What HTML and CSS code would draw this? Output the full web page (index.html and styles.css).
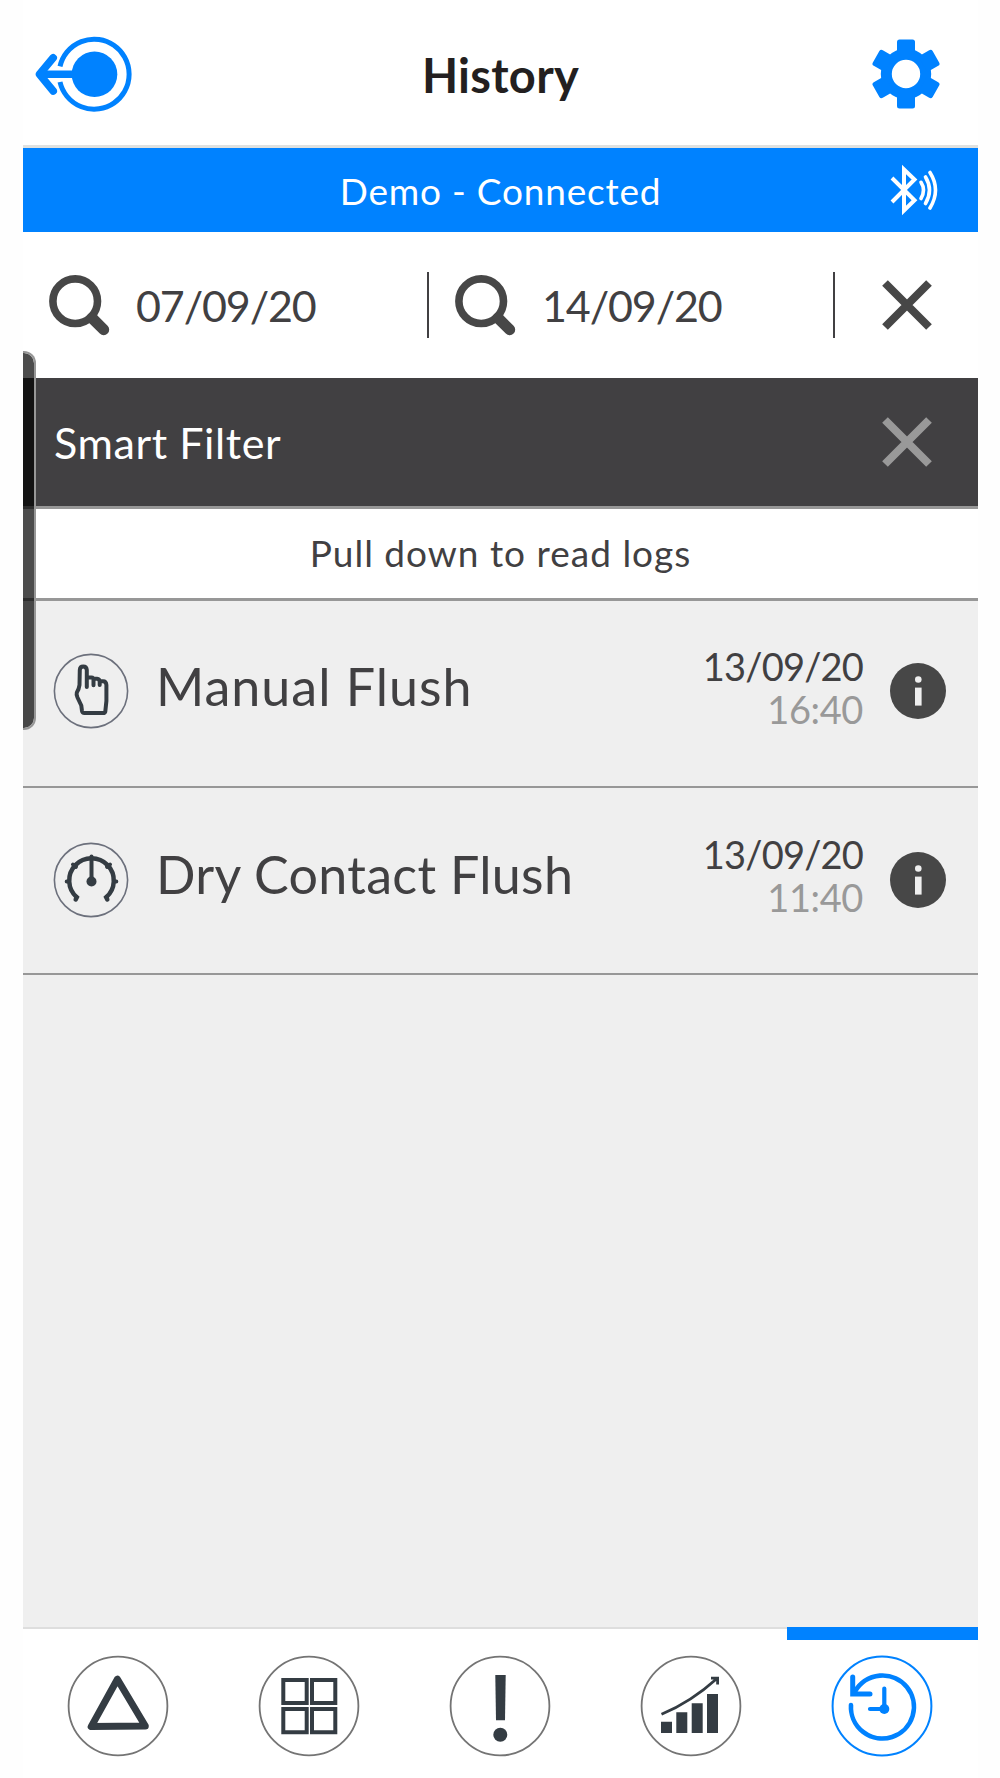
FILE: index.html
```html
<!DOCTYPE html>
<html lang="en">
<head>
    <meta charset="UTF-8">
    <meta name="viewport" content="width=device-width, initial-scale=1.0">
    <title>History</title>
    <link rel="stylesheet" href="styles.css">
</head>
<body>
    <div class="app">
        <header class="header">
            <svg class="icon-back" width="98" height="76" viewBox="0 0 98 76" fill="none" stroke="#0082ff">
                <path d="M25 30.4A35 35 0 1 1 25 46" stroke-width="5"/>
                <circle cx="59.5" cy="38.3" r="22.8" fill="#0082ff" stroke="none"/>
                <path d="M5 38.3H40" stroke-width="7.4"/>
                <path d="M18.2 21.8L4.5 38.3L18.2 55" stroke-width="7.6" stroke-linecap="round" stroke-linejoin="round"/>
            </svg>
            <h1>History</h1>
            <svg class="icon-gear" width="70" height="70" viewBox="-35 -35 70 70" fill="#0082ff">
                <circle r="19.7" fill="none" stroke="#0082ff" stroke-width="11"/>
                <rect x="-9" y="-34.5" width="18" height="15" rx="2.5"/>
                <rect x="-9" y="-34.5" width="18" height="15" rx="2.5" transform="rotate(60)"/>
                <rect x="-9" y="-34.5" width="18" height="15" rx="2.5" transform="rotate(120)"/>
                <rect x="-9" y="-34.5" width="18" height="15" rx="2.5" transform="rotate(180)"/>
                <rect x="-9" y="-34.5" width="18" height="15" rx="2.5" transform="rotate(240)"/>
                <rect x="-9" y="-34.5" width="18" height="15" rx="2.5" transform="rotate(300)"/>
            </svg>
        </header>

        <div class="status">
            <span>Demo - Connected</span>
            <svg class="icon-bt" width="50" height="52" viewBox="0 0 50 52" fill="none" stroke="#fff" stroke-width="4">
                <path d="M2 14L24.5 36.3L14 46.5V5.5L24.5 15.5L2 38"/>
                <g stroke-width="3.6" stroke-linecap="round">
                    <path d="M31 18.3Q36 26 31 34.5"/>
                    <path d="M35.5 13Q43.5 26 35.5 39.5"/>
                    <path d="M40 8.5Q51 26 40 44"/>
                </g>
            </svg>
        </div>

        <div class="dates">
            <div class="date-box">
                <svg width="61" height="61" viewBox="0 0 61 61" fill="none" stroke="#474747">
                    <circle cx="26.2" cy="26.2" r="22.3" stroke-width="7.6"/>
                    <path d="M43 43L54.7 54.7" stroke-width="11" stroke-linecap="round"/>
                </svg>
                <span>07/09/20</span>
            </div>
            <div class="date-box">
                <svg width="61" height="61" viewBox="0 0 61 61" fill="none" stroke="#474747">
                    <circle cx="26.2" cy="26.2" r="22.3" stroke-width="7.6"/>
                    <path d="M43 43L54.7 54.7" stroke-width="11" stroke-linecap="round"/>
                </svg>
                <span>14/09/20</span>
            </div>
            <div class="clear">
                <svg width="50" height="50" viewBox="0 0 50 50" stroke="#474747" stroke-width="8">
                    <path d="M3 3L47 47M47 3L3 47"/>
                </svg>
            </div>
        </div>

        <div class="smart">
            <span>Smart Filter</span>
            <svg width="50" height="50" viewBox="0 0 50 50" stroke="#999" stroke-width="8">
                <path d="M3 3L47 47M47 3L3 47"/>
            </svg>
        </div>

        <div class="pull">Pull down to read logs</div>

        <main class="logs">
            <div class="log">
                <svg class="log-icon" width="76" height="76" viewBox="0 0 76 76" fill="none" stroke="#343c43" stroke-width="4" stroke-linecap="round" stroke-linejoin="round">
                    <circle cx="38" cy="38" r="36.6" stroke="#6c707c" stroke-width="1.6"/>
                    <path d="M33.8 34V17Q33.5 13.5 30.2 13.5Q27 13.5 26.8 17L26.5 32Q26 36 23.8 39.5Q23.2 41.5 24.5 44.5L28.3 52.5L29 58Q29.3 60 31.5 60H50Q52 60 52.3 58.5L53.4 48V32Q53.2 28.2 50 28.2H46.7V32M34.5 24.5H38.5Q40.5 24.5 40.5 27V32.3M41 25.8H44Q46.7 26 46.7 29"/>
                </svg>
                <div class="log-name">Manual Flush</div>
                <div class="log-time">
                    <div class="day">13/09/20</div>
                    <div class="hour">16:40</div>
                </div>
                <svg class="info" width="56" height="56" viewBox="0 0 56 56">
                    <circle cx="28" cy="28" r="28" fill="#474747"/>
                    <circle cx="28.3" cy="16.5" r="3.3" fill="#efefef"/>
                    <rect x="25" y="24.6" width="6.6" height="18" fill="#efefef"/>
                </svg>
            </div>
            <div class="log">
                <svg class="log-icon" width="76" height="76" viewBox="0 0 76 76" fill="none" stroke="#343c43" stroke-width="4.5" stroke-linecap="round">
                    <circle cx="38" cy="38" r="36.6" stroke="#6c707c" stroke-width="1.6"/>
                    <path d="M22.7 57.5L23.8 55.3A22.3 22.3 0 1 1 53.2 55.3L54.3 57.5"/>
                    <path d="M38.5 39.5V14.5M13.7 39.5H16M61 39.5H63.3M20 22.5L23 24.8M57 22.5L54 24.8" stroke-width="4"/>
                    <circle cx="38.5" cy="39.5" r="5" fill="#343c43" stroke="none"/>
                </svg>
                <div class="log-name">Dry Contact Flush</div>
                <div class="log-time">
                    <div class="day">13/09/20</div>
                    <div class="hour">11:40</div>
                </div>
                <svg class="info" width="56" height="56" viewBox="0 0 56 56">
                    <circle cx="28" cy="28" r="28" fill="#474747"/>
                    <circle cx="28.3" cy="16.5" r="3.3" fill="#efefef"/>
                    <rect x="25" y="24.6" width="6.6" height="18" fill="#efefef"/>
                </svg>
            </div>
        </main>

        <nav class="tabs">
            <div class="tab">
                <svg width="102" height="102" viewBox="0 0 102 102" fill="none">
                    <circle cx="51" cy="51" r="49.4" stroke="#747474" stroke-width="1.8"/>
                    <path d="M50.4 24.2L24.2 71.6L78.3 71Z" stroke="#343c43" stroke-width="7" stroke-linejoin="round"/>
                </svg>
            </div>
            <div class="tab">
                <svg width="102" height="102" viewBox="0 0 102 102" fill="none">
                    <circle cx="51" cy="51" r="49.4" stroke="#747474" stroke-width="1.8"/>
                    <path d="M25.3 25H48.7V48H25.3ZM54 25H77.3V48H54ZM25.3 54H48.7V77.3H25.3ZM54 54H77.3V77.3H54Z" stroke="#343c43" stroke-width="4"/>
                </svg>
            </div>
            <div class="tab">
                <svg width="102" height="102" viewBox="0 0 102 102" fill="none">
                    <circle cx="51" cy="51" r="49.4" stroke="#747474" stroke-width="1.8"/>
                    <path d="M46.3 20H56.7L56 65.3H47Z" fill="#343c43"/>
                    <circle cx="51.3" cy="79.7" r="7" fill="#343c43"/>
                </svg>
            </div>
            <div class="tab">
                <svg width="102" height="102" viewBox="0 0 102 102" fill="none">
                    <circle cx="51" cy="51" r="49.4" stroke="#747474" stroke-width="1.8"/>
                    <path d="M21 66.7H32V78H21ZM36.3 57.3H47.3V78H36.3ZM51.7 48.3H62.7V78H51.7ZM67 39H78V78H67Z" fill="#343c43"/>
                    <path d="M21.5 59.3Q51 47 77 23.5M71 23.2H77.6V29.5" stroke="#343c43" stroke-width="2.8"/>
                </svg>
            </div>
            <div class="tab active">
                <svg width="102" height="102" viewBox="0 0 102 102" fill="none" stroke="#0082ff" stroke-width="4.6" stroke-linecap="round">
                    <circle cx="51" cy="51" r="49.4" stroke-width="2"/>
                    <path d="M20 50A31.5 31.5 0 1 0 24 36.5"/>
                    <path d="M21.7 22V39H39" stroke-width="5"/>
                    <path d="M53.3 33.5V54H39" stroke-width="4.2"/>
                    <circle cx="53.3" cy="54" r="5" fill="#0082ff" stroke="none"/>
                </svg>
            </div>
        </nav>

        <div class="drawer"></div>
    </div>
</body>
</html>
```
FILE: styles.css
```css
* {
    box-sizing: border-box;
}

body {
    margin: 0;
    background-color: #fefefe;
    font-family: Lato, "Open Sans", sans-serif;
    color: #414042;
}

svg {
    display: block;
    flex: none;
}

.app {
    position: relative;
    width: 955px;
    height: 1778px;
    margin-left: 23px;
    display: flex;
    flex-direction: column;
}

.header {
    height: 148px;
    padding: 0 37px 0 12px;
    border-bottom: 3px solid #dfe1e0;
    display: grid;
    grid-template-columns: 98px 1fr 70px;
    align-items: center;
    background-color: #fff;
}

.header h1 {
    margin: 0;
    padding: 5px 3px 0 0;
    text-align: center;
    font-size: 47px;
    line-height: 56px;
    letter-spacing: 0.3px;
    color: #231f20;
}

.icon-back,
.icon-gear {
    margin-top: 2px;
}

.status {
    height: 84px;
    padding: 0 38px 0 88px;
    display: flex;
    align-items: center;
    background-color: #0082ff;
    color: #fff;
    font-size: 37px;
}

.status span {
    flex: 1;
    text-align: center;
    letter-spacing: 0.8px;
}

.dates {
    height: 146px;
    display: grid;
    grid-template-columns: 406px 406px 1fr;
    align-items: center;
    background-color: #fff;
}

.date-box {
    height: 66px;
    padding-left: 26px;
    border-right: 2px solid #414042;
    display: flex;
    align-items: center;
    gap: 26px;
    font-size: 43px;
    letter-spacing: -1.1px;
}

.clear {
    display: flex;
    justify-content: center;
}

.smart {
    height: 131px;
    padding: 0 46px 0 31px;
    border-bottom: 3px solid #979797;
    display: flex;
    align-items: center;
    justify-content: space-between;
    background-color: #414042;
    color: #fff;
    font-size: 43px;
    letter-spacing: 0.6px;
}

.pull {
    height: 89px;
    line-height: 87px;
    background-color: #fff;
    text-align: center;
    font-size: 37px;
    letter-spacing: 1px;
}

.logs {
    flex: 1;
    border-top: 3px solid #979797;
    background-color: #efefef;
}

.log {
    height: 187px;
    padding: 0 32px 2px 30px;
    border-bottom: 2px solid #979797;
    display: flex;
    align-items: center;
}

.log:first-child {
    height: 187px;
    padding-bottom: 5px;
}

.log-name {
    flex: 1;
    padding: 0 0 11px 27px;
    font-size: 52px;
    letter-spacing: 0.3px;
}

.log:first-child .log-name {
    letter-spacing: 1px;
}

.log-time {
    margin-right: 27px;
    padding-bottom: 7px;
    text-align: right;
    font-size: 38px;
    line-height: 43px;
}

.day {
    letter-spacing: -0.8px;
}

.hour {
    letter-spacing: -0.4px;
    color: #999;
}

.tabs {
    height: 151px;
    padding-right: 1px;
    border-top: 2px solid #dedede;
    display: grid;
    grid-template-columns: repeat(4, 191px) 1fr;
    background-color: #fff;
}

.tab {
    padding: 26px 1px 0 0;
    display: flex;
    justify-content: center;
}

.active {
    margin: -2px -1px 0 0;
    padding-top: 15px;
    border-top: 13px solid #0082ff;
}

/* side panel handle, lies over the page */
.drawer {
    position: absolute;
    left: 0;
    top: 351px;
    width: 13px;
    height: 379px;
    border: 2px solid #979797;
    border-left: none;
    border-radius: 0 12px 12px 0;
    background-color: rgba(0, 0, 0, 0.7);
    background-clip: padding-box;
}
```
